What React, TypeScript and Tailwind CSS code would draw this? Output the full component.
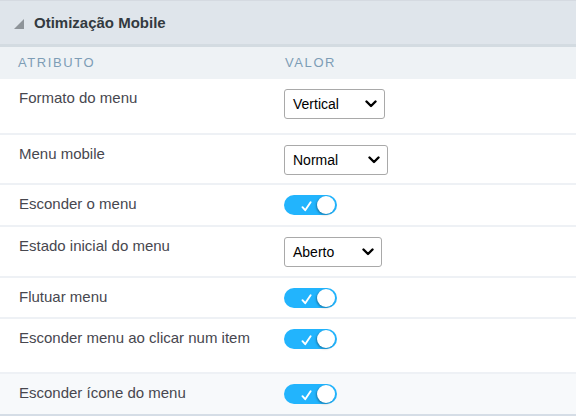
type Row =
  | { label: string; kind: "select"; value: string; width: string; h: string }
  | { label: string; kind: "toggle"; h: string; bg?: string };

const rows: Row[] = [
  { label: "Formato do menu", kind: "select", value: "Vertical", width: "w-[101px]", h: "h-[56px]" },
  { label: "Menu mobile", kind: "select", value: "Normal", width: "w-[104px]", h: "h-[50px]" },
  { label: "Esconder o menu", kind: "toggle", h: "h-[42px]" },
  { label: "Estado inicial do menu", kind: "select", value: "Aberto", width: "w-[98px]", h: "h-[51px]" },
  { label: "Flutuar menu", kind: "toggle", h: "h-[41px]" },
  { label: "Esconder menu ao clicar num item", kind: "toggle", h: "h-[55px]" },
  { label: "Esconder ícone do menu", kind: "toggle", h: "h-[42px]", bg: "bg-[#f7f9fb]" },
];

const Toggle = () => (
  <div className="relative h-[20px] w-[53px] rounded-full bg-[#22b4fd]">
    <svg className="absolute left-[17px] top-[6px]" width="11" height="11" viewBox="0 0 11 11">
      <path d="M1.5 6.2 L4.2 9.2 L9.6 1.2" fill="none" stroke="white" strokeWidth="1.9" strokeLinecap="round" strokeLinejoin="round" />
    </svg>
    <div className="absolute right-[2px] top-[1px] h-[18px] w-[18px] rounded-full bg-white shadow-[-1px_1px_2px_rgba(0,0,0,0.3)]" />
  </div>
);

const Select = ({ value, width }: { value: string; width: string }) => (
  <div className={`${width} flex h-[30px] items-center justify-between rounded-[3px] border border-[#a9a9a9] bg-white pl-[8px] pr-[7px] text-[14px] text-black`}>
    <span>{value}</span>
    <svg width="12" height="8" viewBox="0 0 12 8">
      <path d="M1.5 1.5 L6 6 L10.5 1.5" fill="none" stroke="black" strokeWidth="2.4" strokeLinecap="round" strokeLinejoin="round" />
    </svg>
  </div>
);

export default function App() {
  return (
    <div className="h-[416px] w-[576px] overflow-hidden bg-white font-['Liberation_Sans',Arial,sans-serif]">
      <div className="border-t border-[#d5dae1]">
        <div className="flex h-[46px] items-center gap-[10px] border-b-[3px] border-[#d3dbe1] bg-[#dfe5eb] pl-[14px] pt-[2px]">
          <svg width="10" height="10" viewBox="0 0 10 10">
            <path d="M10 0 L10 10 L0 10 Z" fill="#8e9499" />
          </svg>
          <span className="text-[15px] font-bold text-[#333a40]">Otimização Mobile</span>
        </div>
        <div className="flex h-[32px] items-center bg-[#eef2f5] text-[13px] uppercase tracking-[1.6px] text-[#7d9db6]">
          <div className="w-[284px] pl-[18px]">Atributo</div>
          <div className="pl-[1px]">Valor</div>
        </div>
        {rows.map((r, i) => (
          <div
            key={i}
            className={`flex ${r.h} ${r.kind === "toggle" && r.bg ? r.bg : "bg-white"} ${i === rows.length - 1 ? "border-b-2 border-[#d5dde6]" : "border-b-2 border-[#eef1f5]"}`}
          >
            <div className="w-[284px] pl-[19px] pt-[9px] text-[15px] leading-[20px] text-[#47474f]">{r.label}</div>
            <div className="pt-[10px]">
              {r.kind === "select" ? <Select value={r.value} width={r.width} /> : <Toggle />}
            </div>
          </div>
        ))}
      </div>
    </div>
  );
}
